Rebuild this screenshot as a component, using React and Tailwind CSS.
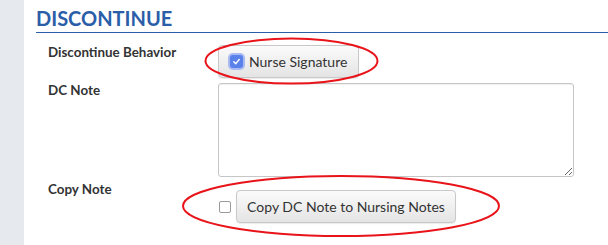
import React from "react";

function GrayButton({ children, className = "" }) {
  return (
    <button
      type="button"
      className={`flex items-center h-[33px] rounded-[4px] border border-[#c8c8c8] bg-gradient-to-b from-[#fbfbfb] to-[#e4e4e4] shadow-[0_1px_1px_rgba(0,0,0,0.08)] text-[14px] text-[#333] ${className}`}
    >
      {children}
    </button>
  );
}

export default function App() {
  return (
    <div className="relative flex w-[608px] h-[245px] bg-white font-['Lato',_'Liberation_Sans',_sans-serif] overflow-hidden">
      {/* left rail */}
      <div className="w-[24px] shrink-0 bg-[#e6e9ed]" />

      <div className="flex-1 pl-[12px]">
        {/* Section title */}
        <h2 className="pt-[6px] pb-[2px] leading-[24px] text-[20px] font-bold text-[#2b5ea8] border-b border-[#2b5ea8]">
          DISCONTINUE
        </h2>

        <div className="pl-[12px] mt-[12px] grid grid-cols-[170px_1fr] gap-y-[5px]">
          <div className="text-[13.4px] font-bold leading-[17px] text-[#333] -mt-[1.5px]">
            Discontinue Behavior
          </div>
          <div>
            <GrayButton className="w-[141px] pl-[11px]">
              <span className="flex items-center justify-center w-[13px] h-[13px] rounded-[3px] bg-[#5a80ea] ring-2 ring-[#a9b9f2] mr-[6px]">
                <svg width="9" height="9" viewBox="0 0 10 10">
                  <path d="M2 5.2 L4.2 7.4 L8 2.8" fill="none" stroke="white" strokeWidth="1.6" strokeLinecap="round" strokeLinejoin="round" />
                </svg>
              </span>
              Nurse Signature
            </GrayButton>
          </div>

          <div className="text-[13.4px] font-bold leading-[17px] text-[#333] -mt-[1.5px]">
            DC Note
          </div>
          <div>
            <textarea className="block w-[356px] h-[94px] rounded-[3px] border border-[#c6c6c6] shadow-[inset_0_1px_1px_rgba(0,0,0,0.06)] outline-none" />
          </div>

          <div className="text-[13.4px] font-bold leading-[17px] text-[#333] -mt-[1px]">
            Copy Note
          </div>
          <div className="flex items-center pt-[7.5px]">
            <span className="w-[12px] h-[12px] rounded-[2px] border border-[#9a9a9a] bg-white mt-[1px] mr-[5px] ml-[1px]" />
            <GrayButton className="w-[220px] justify-center">
              Copy DC Note to Nursing Notes
            </GrayButton>
          </div>
        </div>
      </div>

      {/* annotation ellipses */}
      <svg className="absolute inset-0 pointer-events-none" width="608" height="245">
        <ellipse cx="291.5" cy="61" rx="86" ry="22.5" fill="none" stroke="#e8141a" strokeWidth="2" />
        <ellipse cx="341" cy="206" rx="158" ry="30" fill="none" stroke="#e8141a" strokeWidth="2" />
      </svg>
    </div>
  );
}
